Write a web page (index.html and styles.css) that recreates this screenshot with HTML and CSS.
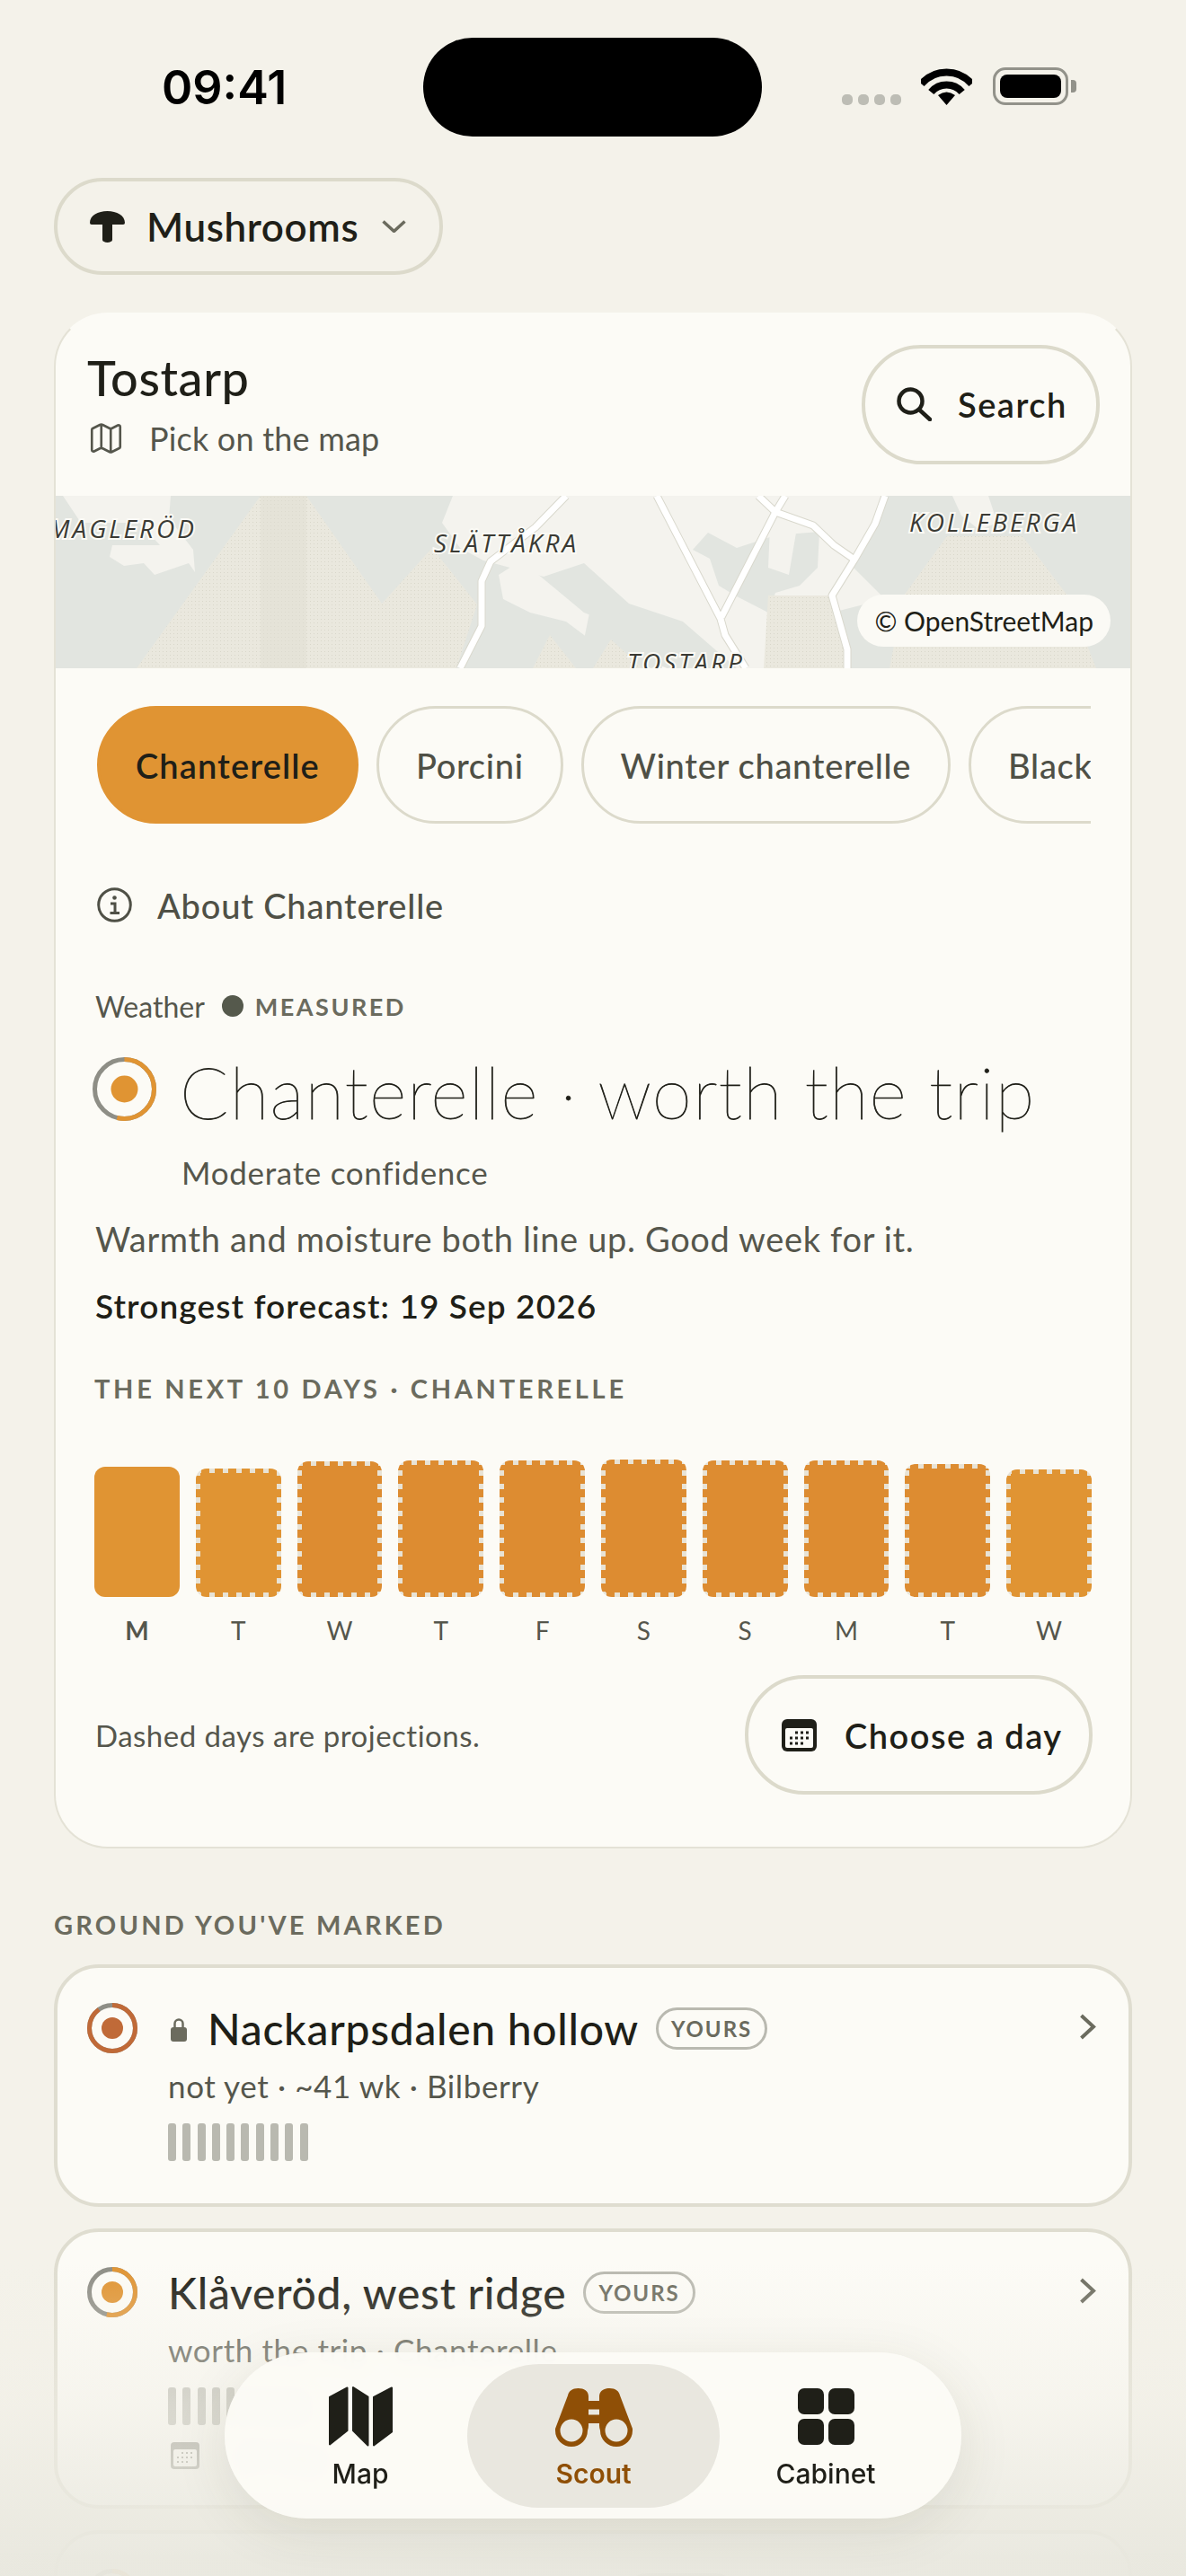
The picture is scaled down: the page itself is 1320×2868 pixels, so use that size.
FILE: index.html
```html
<!DOCTYPE html>
<html lang="en">
<head>
<meta charset="UTF-8" />
<title>Scout</title>
<link rel="stylesheet" href="styles.css">
</head>
<body>
<div class="phone">

  <!-- STATUS BAR -->
  <div class="status">
    <div class="time">09:41</div>
    <div class="island"></div>
    <div class="status-icons">
      <div class="signal"><i></i><i></i><i></i><i></i></div>
      <svg class="wifi" viewBox="0 0 57 42" aria-hidden="true">
        <path d="M.5 18.5A36.5 36.5 0 0 1 56.5 18.5M11.3 27.5A22.5 22.5 0 0 1 45.7 27.5" fill="none" stroke="#000" stroke-width="8"/>
        <path d="M28.5 42 19 31Q28.5 24 38 31Z" fill="#000"/>
      </svg>
      <div class="battery"><div class="battery-fill"></div></div>
      <div class="battery-nub"></div>
    </div>
  </div>

  <button class="kind-pill">
    <svg class="kind-icon" viewBox="0 0 39 35" aria-hidden="true">
      <path d="M0 13C0 5 9 0 19.500 0S39 5 39 13q0 2-2 2H25V32a5.500 3 0 0 1-11 0V15H2q-2 0-2-2Z" fill="#1f1f18"/>
    </svg>
    <span>Mushrooms</span>
    <svg class="kind-chev" viewBox="0 0 27 14" aria-hidden="true"><path d="M1.500 1.500 13.500 12.500 25.500 1.500" fill="none" stroke="#6b6b5e" stroke-width="3.500"/></svg>
  </button>

  <!-- MAIN CARD -->
  <section class="card">
    <div class="card-head">
      <div class="head-text">
        <div class="place">Tostarp</div>
        <div class="pick">
          <svg class="pick-icon" viewBox="0 0 24 24" aria-hidden="true"><path d="M14.106 5.553a2 2 0 0 0 1.788 0l3.659-1.830A1 1 0 0 1 21 4.619v12.764a1 1 0 0 1-.553.894l-4.553 2.277a2 2 0 0 1-1.788 0l-4.212-2.106a2 2 0 0 0-1.788 0l-3.659 1.830A1 1 0 0 1 3 19.381V6.618a1 1 0 0 1 .553-.894l4.553-2.277a2 2 0 0 1 1.788 0zM15 5.764v15M9 3.236v15"/></svg>
          <span>Pick on the map</span>
        </div>
      </div>
      <button class="btn btn-search">
        <svg class="search-icon" viewBox="0 0 39 38" aria-hidden="true"><circle cx="15.500" cy="15.500" r="13" /><path d="M25 25 37 36"/></svg>
        <span>Search</span>
      </button>
    </div>

    <div class="map">
      <svg class="map-art" viewBox="0 0 1200 192" aria-hidden="true">
        <defs>
          <pattern id="stipple" width="4" height="4" patternUnits="userSpaceOnUse">
            <rect width="4" height="4" fill="#eae8de"/><rect x="1" y="1" width="1" height="1" fill="#d9d7ca"/>
          </pattern>
        </defs>
        <rect width="1200" height="192" fill="#e2e5e0"/>
        <!-- fields -->
        <path d="M230 0H281L365 120 421 58 471 121 448 192H92Z" fill="url(#stipple)"/>
        <path d="M230 0H281V192H230Z" fill="#dfddd1" opacity=".5"/>
        <path d="M27 7H92V30H27Z" fill="url(#stipple)"/>
        <!-- land -->
        <path d="M10 0H130L128 25 155 60 157 85 150 75 112 88 100 75 78 78 62 68 65 55 118 55 95 30 30 30Z" fill="#f4f3ee"/>
        <path d="M444 0H925L914 31 890 80 905 95 925 115 866 130 872 192H760L700 140 640 120 590 75 545 90 478 72 452 58 432 30Z" fill="#f4f3ee"/>
        <path d="M711 60 728 41 760 58 803 44 852 40 850 80 830 100 803 108 795 130 760 112 740 100 730 70Z" fill="#e2e5e0"/>
        <path d="M797 35 826 41 818 88 795 80Z" fill="#f4f3ee"/>
        <path d="M486 95 510 85 540 100 575 112 580 135 640 150 660 192H470L480 130Z" fill="#e2e5e0"/>
        <path d="M495 88 520 72 560 105 590 130 640 150 610 170 570 140 530 130 500 115Z" fill="#f4f3ee"/>
        <path d="M795 111H865L884 192H790Z" fill="url(#stipple)"/>
        <path d="M600 111 642 140 655 192H560L590 160Z" fill="#e2e5e0"/>
        <path d="M620 160 655 192H600Z" fill="url(#stipple)"/>
        <path d="M533 192 552 155 581 192Z" fill="url(#stipple)"/>
        <path d="M994 45H1078L1128 111 1160 192H930L946 111Z" fill="url(#stipple)"/>
        <path d="M1000 0H1040L1050 30 1030 38 1010 22Z" fill="#f4f3ee"/>
        <!-- roads -->
        <g fill="none" stroke-linejoin="round">
          <g stroke="#d9d8cd" stroke-width="9">
            <path d="M570 0 536 35 486 73 476 95V145L452 192"/>
            <path d="M671 0 742 137 747 155 770 192"/>
            <path d="M743 135 803 18 814 0"/>
            <path d="M784 0 803 18 845 33 868 55 891 71"/>
            <path d="M925 0 914 31 891 71 866 111 883 171V192"/>
          </g>
          <g stroke="#fff" stroke-width="7">
            <path d="M570 0 536 35 486 73 476 95V145L452 192"/>
            <path d="M671 0 742 137 747 155 770 192"/>
            <path d="M743 135 803 18 814 0"/>
            <path d="M784 0 803 18 845 33 868 55 891 71"/>
            <path d="M925 0 914 31 891 71 866 111 883 171V192"/>
          </g>
        </g>
        <!-- labels -->
        <g class="map-labels">
          <text x="-6" y="47">MAGLERÖD</text>
          <text x="423" y="63">SLÄTTÅKRA</text>
          <text x="952" y="40">KOLLEBERGA</text>
          <text x="638" y="196">TOSTARP</text>
        </g>
      </svg>
      <div class="attrib">© OpenStreetMap</div>
    </div>

    <div class="card-body">
      <div class="chips">
        <button class="chip chip-on">Chanterelle</button>
        <button class="chip">Porcini</button>
        <button class="chip">Winter chanterelle</button>
        <button class="chip">Black trumpet</button>
      </div>

      <div class="about">
        <svg class="about-icon" viewBox="0 0 39 39" aria-hidden="true">
          <circle cx="19.500" cy="19.500" r="17.800"/>
          <circle class="dot" cx="19.500" cy="11.500" r="2.300"/>
          <path d="M15 18H20V28M14.500 28.500H25"/>
        </svg>
        <span>About Chanterelle</span>
      </div>

      <div class="weather">
        <span>Weather</span>
        <i class="weather-dot"></i>
        <span class="measured">MEASURED</span>
      </div>

      <div class="verdict">
        <svg class="dial dial-lg" viewBox="0 0 71 71" aria-hidden="true">
          <circle class="dial-track" cx="35.500" cy="35.500" r="33"/>
          <circle class="dial-arc arc-amber" cx="35.500" cy="35.500" r="33" pathLength="100" stroke-dasharray="54 100" transform="rotate(-90 35.500 35.500)"/>
          <circle class="fill-amber" cx="35.500" cy="35.500" r="15"/>
        </svg>
        <h1>Chanterelle · worth the trip</h1>
      </div>
      <div class="confidence">Moderate confidence</div>
      <p class="why">Warmth and moisture both line up. Good week for it.</p>
      <p class="strongest">Strongest forecast: 19 Sep 2026</p>

      <div class="eyebrow days-title">THE NEXT 10 DAYS · CHANTERELLE</div>

      <div class="bars">
        <div class="bar bar-today h145"></div>
        <div class="bar bar-dash bar-light h143"></div>
        <div class="bar bar-dash h151"></div>
        <div class="bar bar-dash h152"></div>
        <div class="bar bar-dash h152"></div>
        <div class="bar bar-dash h153"></div>
        <div class="bar bar-dash h152"></div>
        <div class="bar bar-dash h152"></div>
        <div class="bar bar-dash h148"></div>
        <div class="bar bar-dash bar-light h142"></div>
      </div>
      <div class="bar-days">
        <b>M</b><span>T</span><span>W</span><span>T</span><span>F</span><span>S</span><span>S</span><span>M</span><span>T</span><span>W</span>
      </div>

      <div class="card-foot">
        <span class="dashed-note">Dashed days are projections.</span>
        <button class="btn btn-day">
          <svg class="cal-icon" viewBox="0 0 39 36" aria-hidden="true">
            <rect width="39" height="36" rx="6" fill="#1f1f18"/>
            <rect x="4" y="10" width="31" height="22" rx="2" fill="#fcfbf6"/>
            <path d="M15 15h3M21 15h3M27 15h3M9 21h3M15 21h3M21 21h3M27 21h3M9 27h3M15 27h3M21 27h3" stroke="#1f1f18" stroke-width="3"/>
          </svg>
          <span>Choose a day</span>
        </button>
      </div>
    </div>
  </section>

  <div class="eyebrow ground-title">GROUND YOU'VE MARKED</div>

  <div class="spot spot-first">
    <svg class="dial dial-sm" viewBox="0 0 56 56" aria-hidden="true">
      <circle class="dial-track" cx="28" cy="28" r="25.500"/>
      <circle class="dial-arc arc-rust" cx="28" cy="28" r="25.500" pathLength="100" stroke-dasharray="90 100" transform="rotate(-90 28 28)"/>
      <circle class="fill-rust" cx="28" cy="28" r="12"/>
    </svg>
    <div class="spot-main">
      <div class="spot-top">
        <svg class="lock" viewBox="0 0 18 26" aria-hidden="true"><path d="M4.500 12V6a4.500 4.500 0 0 1 9 0v6" fill="none" stroke="#6b6b5e" stroke-width="2.500"/><rect y="10" width="18" height="16" rx="3" fill="#6b6b5e"/></svg>
        <span class="spot-name">Nackarpsdalen hollow</span>
        <span class="yours">YOURS</span>
        <svg class="chev" viewBox="0 0 19 29" aria-hidden="true"><path d="M2.500 2 16 14.500 2.500 27"/></svg>
      </div>
      <div class="spot-sub">not yet · ~41 wk · Bilberry</div>
      <div class="ticks"><i></i><i></i><i></i><i></i><i></i><i></i><i></i><i></i><i></i><i></i></div>
    </div>
  </div>

  <div class="spot spot-second">
    <svg class="dial dial-sm" viewBox="0 0 56 56" aria-hidden="true">
      <circle class="dial-track" cx="28" cy="28" r="25.500"/>
      <circle class="dial-arc arc-amber" cx="28" cy="28" r="25.500" pathLength="100" stroke-dasharray="54 100" transform="rotate(-90 28 28)"/>
      <circle class="fill-amber" cx="28" cy="28" r="12"/>
    </svg>
    <div class="spot-main">
      <div class="spot-top">
        <span class="spot-name">Klåveröd, west ridge</span>
        <span class="yours">YOURS</span>
        <svg class="chev" viewBox="0 0 19 29" aria-hidden="true"><path d="M2.500 2 16 14.500 2.500 27"/></svg>
      </div>
      <div class="spot-sub">worth the trip · Chanterelle</div>
      <div class="ticks"><i></i><i></i><i></i><i></i><i></i><i></i><i></i><i></i><i></i><i></i></div>
      <div class="spot-date">
        <svg class="cal-small" viewBox="0 0 32 30" aria-hidden="true">
          <rect width="32" height="30" rx="4" fill="#8a8a80"/>
          <rect x="3" y="8" width="26" height="19" rx="2" fill="#fcfbf6"/>
          <path d="M12 12h2M17 12h2M22 12h2M7 17h2M12 17h2M17 17h2M22 17h2M7 22h2M12 22h2M17 22h2" stroke="#8a8a80" stroke-width="2"/>
        </svg>
        <span>19 Sep</span>
      </div>
    </div>
  </div>

  <div class="spot spot-third">
    <svg class="dial dial-sm" viewBox="0 0 56 56" aria-hidden="true">
      <circle class="dial-track" cx="28" cy="28" r="25.500"/>
      <circle class="dial-arc arc-amber" cx="28" cy="28" r="25.500" pathLength="100" stroke-dasharray="54 100" transform="rotate(-90 28 28)"/>
    </svg>
    <div class="spot-main">
      <div class="spot-top">
        <span class="spot-gap"></span>
        <span class="yours">YOURS</span>
      </div>
    </div>
  </div>

  <!-- BOTTOM FADE + TAB BAR -->
  <div class="fade"></div>
  <nav class="tabs">
    <a class="tab">
      <svg class="tab-map" viewBox="0 0 71 67" aria-hidden="true">
        <path d="M1 12 20.500 1.500V49L1 64.500Z M27 1 43.500 11.500V65.500L27 49Z M50 12 70 1.500V50.500L50 65.500Z" fill="#1f1f18" stroke="#1f1f18" stroke-width="2" stroke-linejoin="round"/>
      </svg>
      <span>Map</span>
    </a>
    <a class="tab tab-on">
      <svg class="tab-scout" viewBox="0 0 88 65" aria-hidden="true">
        <path fill-rule="evenodd" fill="#8f4f06" d="M15 8C16 3 20 0 26.500 0S38 3 38 9V14H50V9C50 3 55 0 61.500 0S72 3 73 8L87 45A18 18 0 0 1 87 47 18 18 0 0 1 51 47 18 18 0 0 1 50 40V39H38V40A18 18 0 0 1 37 47 18 18 0 0 1 1 47 18 18 0 0 1 1 45ZM38 23.500V29.500H50V23.500ZM19 34.500A12.500 12.500 0 1 0 19 59.500 12.500 12.500 0 1 0 19 34.500ZM69 34.500A12.500 12.500 0 1 0 69 59.500 12.500 12.500 0 1 0 69 34.500Z"/>
      </svg>
      <span>Scout</span>
    </a>
    <a class="tab">
      <svg class="tab-cabinet" viewBox="0 0 63 63" aria-hidden="true">
        <rect width="29" height="29" rx="7"/><rect x="34" width="29" height="29" rx="7"/>
        <rect y="34" width="29" height="29" rx="7"/><rect x="34" y="34" width="29" height="29" rx="7"/>
      </svg>
      <span>Cabinet</span>
    </a>
  </nav>
</div>
</body>
</html>
```

FILE: styles.css
```css
/* Reset and base */
* {
  box-sizing: border-box;
}
html, body {
  margin: 0;
  height: 2868px;
  overflow: hidden;
}
body {
  font-family: Lato, "Noto Sans", sans-serif;
  background: #f4f2ea;
  color: #1f1f18;
}
button {
  font: inherit;
  color: inherit;
  background: none;
}
p, h1 {
  margin: 0;
}
.phone {
  position: relative;
  width: 1320px;
  height: 2868px;
  padding: 0 60px;
  overflow: hidden;
}

/* Status bar */
.status {
  display: flex;
  align-items: flex-start;
  height: 198px;
  padding-top: 42px;
}
.time {
  width: 411px;
  padding: 27px 0 0 120px;
  font-family: Inter, sans-serif;
  font-size: 52px;
  line-height: 58px;
  font-weight: 600;
  color: #000;
}
.island {
  width: 377px;
  height: 110px;
  border-radius: 55px;
  background: #000;
}
.status-icons {
  display: flex;
  align-items: flex-end;
  height: 75px;
  margin-left: 89px;
}
.signal {
  display: flex;
  gap: 6px;
  margin-right: 22px;
}
.signal i {
  width: 12px;
  height: 12px;
  border-radius: 5px;
  background: #bdbdb5;
}
.wifi {
  width: 57px;
  height: 42px;
  margin-right: 23px;
}
.battery {
  width: 84px;
  height: 42px;
  padding: 5px;
  border: 3px solid #92928a;
  border-radius: 14px;
}
.battery-fill {
  height: 100%;
  border-radius: 8px;
  background: #000;
}
.battery-nub {
  width: 6px;
  height: 14px;
  margin: 0 0 14px 3px;
  border-radius: 0 4px 4px 0;
  background: #92928a;
}

/* Category pill */
.kind-pill {
  display: flex;
  align-items: center;
  width: 433px;
  height: 108px;
  padding: 0 0 0 36px;
  border: 4px solid #dcdacb;
  border-radius: 54px;
  font-size: 44px;
  font-weight: 600;
  letter-spacing: .6px;
}
.kind-icon {
  width: 39px;
  height: 35px;
  margin-right: 24px;
}
.kind-chev {
  width: 27px;
  height: 14px;
  margin-left: 26px;
}

/* Main card */
.card {
  margin-top: 42px;
  border: 2px solid #e4e2d6;
  border-top-color: #fcfbf6;
  border-radius: 60px;
  background: #fcfbf6;
  overflow: hidden;
}
.card-head {
  display: flex;
  align-items: center;
  justify-content: space-between;
  height: 202px;
  padding: 0 34px 0 35px;
}
.head-text {
  padding-bottom: 3px;
}
.place {
  font-size: 54px;
  line-height: 62px;
  font-weight: 500;
  letter-spacing: .6px;
}
.pick {
  display: flex;
  align-items: center;
  gap: 27px;
  margin-top: 14px;
  font-size: 36px;
  line-height: 44px;
  letter-spacing: .2px;
  color: #55564c;
}
.pick-icon {
  width: 42px;
  height: 42px;
  fill: none;
  stroke: #55564c;
  stroke-width: 1.500;
}
.btn {
  display: flex;
  align-items: center;
  height: 133px;
  border: 4px solid #dcdacb;
  border-radius: 66px;
  font-size: 38px;
  font-weight: 600;
  letter-spacing: 1.500px;
}
.btn-search {
  width: 265px;
  margin-top: -2px;
  padding: 0 0 0 35px;
  gap: 29px;
}
.search-icon {
  width: 39px;
  height: 38px;
  fill: none;
  stroke: #1f1f18;
  stroke-width: 4.500;
  stroke-linecap: round;
}

/* Map strip */
.map {
  position: relative;
  height: 192px;
  margin: 0 -2px;
}
.map-art {
  display: block;
  width: 1200px;
  height: 192px;
}
.map-labels text {
  font-family: "Open Sans", sans-serif;
  font-style: italic;
  font-size: 28px;
  letter-spacing: 3px;
  fill: #3a3a34;
  stroke: #fbfaf5;
  stroke-width: 4px;
  paint-order: stroke;
}
.attrib {
  position: absolute;
  right: 24px;
  bottom: 24px;
  height: 58px;
  padding: 0 19px;
  border-radius: 29px;
  background: #fbfaf5;
  font-size: 30px;
  line-height: 58px;
  color: #1f1f18;
}

/* Card body */
.card-body {
  padding: 42px 44px 58px;
}
.chips {
  display: flex;
  gap: 20px;
  margin-left: 2px;
  overflow: hidden;
}
.chip {
  flex: none;
  height: 131px;
  padding: 0 41px;
  border: 3px solid #dcdacb;
  border-radius: 66px;
  font-size: 38px;
  font-weight: 500;
  letter-spacing: .7px;
  color: #4f5046;
}
.chip-on {
  padding: 0 40px;
  border-color: #e09433;
  background: #e09433;
  font-weight: 600;
  letter-spacing: 1.100px;
  color: #1f1f18;
}
.about {
  display: flex;
  align-items: center;
  gap: 28px;
  margin: 71px 0 0 2px;
  height: 39px;
  font-size: 38px;
  font-weight: 500;
  letter-spacing: .8px;
  color: #4f5046;
}
.about-icon {
  width: 39px;
  height: 39px;
  fill: none;
  stroke: #4f5046;
  stroke-width: 3;
}
.about-icon .dot {
  fill: #4f5046;
  stroke: none;
}
.weather {
  display: flex;
  align-items: center;
  height: 26px;
  margin-top: 80px;
  font-size: 32px;
  color: #55564c;
}
.weather-dot {
  width: 24px;
  height: 24px;
  margin: 0 13px 0 19px;
  border-radius: 50%;
  background: #55594c;
}
.measured {
  font-size: 27px;
  font-weight: 700;
  letter-spacing: 2.500px;
  color: #6b6b5e;
}
.verdict {
  display: flex;
  align-items: flex-start;
  gap: 26px;
  margin: 44px 0 0 -3px;
}
.dial {
  flex: none;
}
.dial-lg {
  width: 71px;
  height: 71px;
}
.dial-sm {
  width: 56px;
  height: 56px;
}
.dial-track {
  fill: none;
  stroke: #8e8e86;
  stroke-width: 5;
}
.dial-arc {
  fill: none;
  stroke-width: 5;
}
.arc-amber { stroke: #e09433; }
.arc-rust { stroke: #c06a38; }
.fill-amber { fill: #e09433; }
.fill-rust { fill: #c06a38; }
h1 {
  font-size: 80px;
  line-height: 76px;
  font-weight: 200;
  letter-spacing: 1.150px;
  -webkit-text-stroke: .8px #1f1f18;
  white-space: nowrap;
}
.confidence {
  margin: 30px 0 0 96px;
  font-size: 35px;
  line-height: 44px;
  letter-spacing: .7px;
  color: #55564c;
}
.why {
  margin-top: 27px;
  font-size: 38px;
  line-height: 50px;
  letter-spacing: .65px;
  color: #55564c;
}
.strongest {
  margin-top: 25px;
  font-size: 37px;
  line-height: 50px;
  font-weight: 600;
  letter-spacing: 1.100px;
}
.eyebrow {
  font-size: 29px;
  line-height: 36px;
  font-weight: 700;
  letter-spacing: 3.200px;
  color: #6b6b5e;
}
.days-title {
  margin: 49px 0 0 -1px;
  letter-spacing: 3.700px;
}

/* Ten day bars */
.bars {
  display: grid;
  grid-template-columns: repeat(10, 1fr);
  gap: 18px;
  align-items: end;
  height: 153px;
  margin: 61px -1px 0 -1px;
}
.bar {
  border-radius: 12px;
  background-color: #dd8c31;
}
.bar-dash {
  background-image:
    repeating-linear-gradient(90deg, #e8e3d6 0 6px, transparent 6px 15px),
    repeating-linear-gradient(90deg, #e8e3d6 0 6px, transparent 6px 15px),
    repeating-linear-gradient(0deg, #e8e3d6 0 6px, transparent 6px 15px),
    repeating-linear-gradient(0deg, #e8e3d6 0 6px, transparent 6px 15px);
  background-size: 100% 5px, 100% 5px, 5px 100%, 5px 100%;
  background-position: 0 0, 0 100%, 0 0, 100% 0;
  background-repeat: no-repeat;
}
.bar-today {
  background-color: #e09433;
}
.bar-light {
  background-color: #e09433;
}
.h142 { height: 142px; }
.h143 { height: 143px; }
.h145 { height: 145px; }
.h148 { height: 148px; }
.h151 { height: 151px; }
.h152 { height: 152px; }
.h153 { height: 153px; }
.bar-days {
  display: grid;
  grid-template-columns: repeat(10, 1fr);
  gap: 18px;
  margin: 19px -1px 0;
  font-size: 28px;
  line-height: 36px;
  text-align: center;
  color: #55564c;
}
.card-foot {
  display: flex;
  align-items: center;
  justify-content: space-between;
  margin: 32px -2px 0 0;
}
.dashed-note {
  font-size: 33px;
  letter-spacing: .5px;
  color: #55564c;
}
.btn-day {
  width: 387px;
  padding: 0 0 0 37px;
  gap: 31px;
}
.cal-icon {
  width: 39px;
  height: 36px;
}

/* Marked ground list */
.ground-title {
  margin-top: 67px;
}
.spot {
  display: flex;
  gap: 34px;
  padding: 39px 36px 0 33px;
  border: 4px solid #dfddd0;
  border-radius: 50px;
  background: #fcfbf6;
}
.spot-first {
  height: 270px;
  margin-top: 26px;
}
.spot-second {
  height: 312px;
  margin-top: 24px;
}
.spot-third {
  height: 200px;
  margin-top: 24px;
}
.spot-main {
  flex: 1;
}
.spot-top {
  display: flex;
  align-items: center;
  height: 56px;
}
.lock {
  width: 18px;
  height: 26px;
  margin: 4px 23px 0 3px;
}
.spot-name {
  font-size: 48px;
  font-weight: 500;
  letter-spacing: .7px;
}
.yours {
  height: 47px;
  margin-left: 19px;
  padding: 0 14px;
  border: 3px solid #b9b9b0;
  border-radius: 24px;
  font-size: 24px;
  line-height: 41px;
  font-weight: 700;
  letter-spacing: 2px;
  color: #6b6b5e;
}
.spot-gap {
  width: 490px;
}
.chev {
  width: 19px;
  height: 29px;
  margin: -4px 0 0 auto;
  fill: none;
  stroke: #6b6b5e;
  stroke-width: 4;
}
.spot-sub {
  margin-top: 14px;
  font-size: 35px;
  line-height: 44px;
  letter-spacing: .6px;
  color: #55564c;
}
.ticks {
  display: flex;
  gap: 7.300px;
  margin-top: 20px;
}
.ticks i {
  width: 9px;
  height: 42px;
  border-radius: 3px;
  background: #b9b9b0;
}
.spot-date {
  display: flex;
  align-items: center;
  gap: 40px;
  margin-top: 14px;
  font-size: 32px;
  color: #55564c;
}
.cal-small {
  width: 32px;
  height: 30px;
  margin-left: 3px;
}

/* Bottom fade and tab bar */
.fade {
  position: absolute;
  left: 0;
  right: 0;
  bottom: 0;
  height: 348px;
  background: linear-gradient(to bottom, rgba(241,239,230,0), rgba(241,239,230,.55) 45%, rgba(233,232,223,.96) 95%);
}
.tabs {
  position: absolute;
  left: 250px;
  top: 2619px;
  display: flex;
  width: 820px;
  height: 185px;
  padding: 13px 0 0 0;
  border-radius: 92px;
  background: rgba(252,251,246,.95);
  backdrop-filter: blur(10px);
  box-shadow: 0 14px 60px rgba(60,55,30,.10);
}
.tab {
  display: flex;
  flex-direction: column;
  align-items: center;
  font-family: Inter, sans-serif;
  font-size: 30px;
  line-height: 36px;
  font-weight: 500;
}
.tab:nth-child(1) {
  width: 270px;
  padding: 25px 0 0 32px;
}
.tab:nth-child(3) {
  width: 269px;
  padding: 27px 33px 0 0;
}
.tab-on {
  width: 281px;
  height: 160px;
  padding-top: 27px;
  border-radius: 80px;
  background: #e9e7df;
  color: #8f4f06;
  font-weight: 600;
}
.tab svg {
  display: block;
  margin-bottom: 12px;
}
.tab .tab-cabinet {
  margin-bottom: 14px;
}
.tab-map {
  width: 71px;
  height: 67px;
}
.tab-scout {
  width: 88px;
  height: 65px;
}
.tab-cabinet {
  width: 63px;
  height: 63px;
  fill: #1f1f18;
}
```
